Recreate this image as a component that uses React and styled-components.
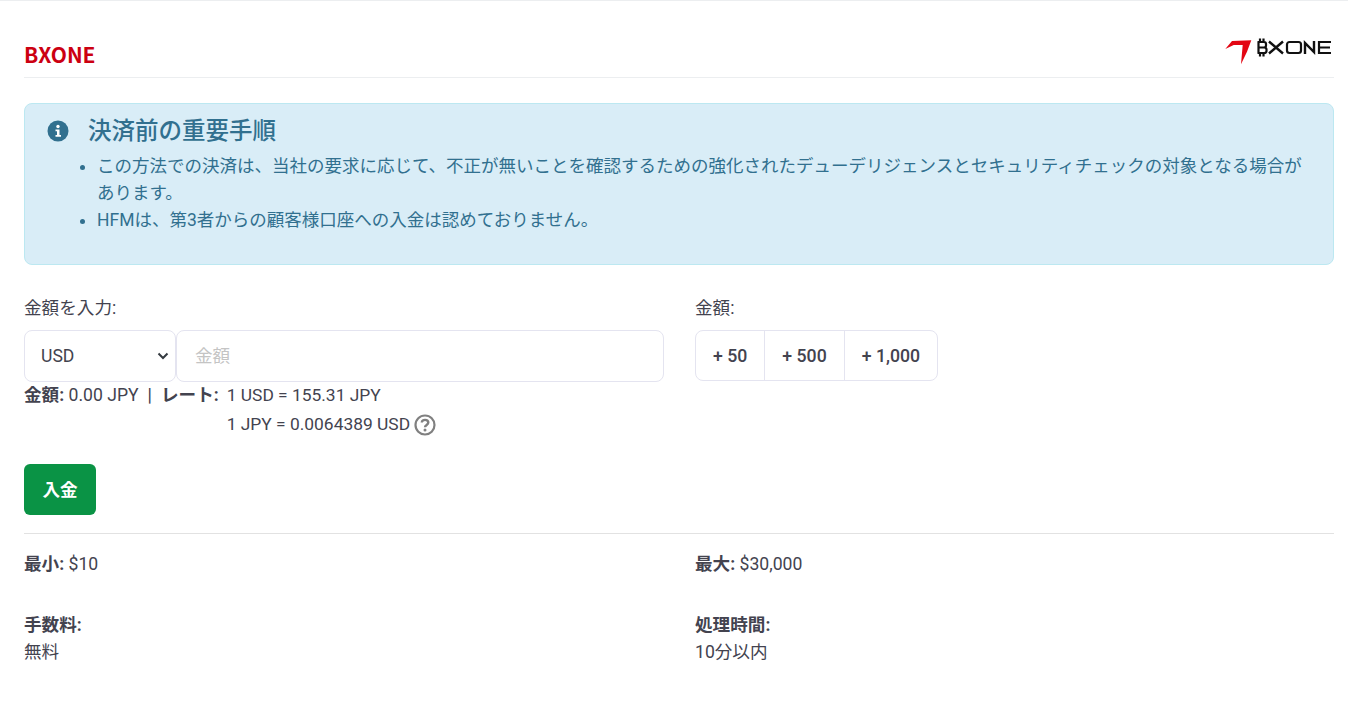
import React from 'react'
import styled, { createGlobalStyle } from 'styled-components'

const GlobalStyle = createGlobalStyle`
  html, body {
    margin: 0;
    background: #fff;
  }
  body {
    font-family: Roboto, "Noto Sans CJK JP", sans-serif;
    font-size: 17.6px;
    color: #43434f;
  }
  * {
    box-sizing: border-box;
  }
`

const Page = styled.div`
  border-top: 1px solid #eceef0;
  padding: 0 14px 0 24px;
  height: 728px;
  overflow: hidden;
`

const Header = styled.header`
  display: flex;
  justify-content: space-between;
  align-items: flex-end;
  height: 77px;
  border-bottom: 1px solid #eceef0;
  padding-bottom: 9px;
`

const Brand = styled.h1`
  margin: 0;
  font-family: "Noto Sans CJK JP", sans-serif;
  font-size: 21px;
  line-height: 27px;
  font-weight: 700;
  color: #cc0011;
`

const LogoWrap = styled.div`
  display: flex;
  height: 29px;
  margin: 0 0 2px;
`

const Alert = styled.section`
  margin-top: 25px;
  height: 162px;
  background: #d9edf7;
  border: 1px solid #bce8f1;
  border-radius: 8px;
  color: #31708f;
  padding: 13px 22px;
`

const AlertTitle = styled.div`
  display: flex;
  align-items: center;
  gap: 19px;
  font-size: 23.5px;
  line-height: 28px;
  font-weight: 500;
`

const AlertList = styled.ul`
  margin: 8px 0 0;
  padding: 0 0 0 50px;
  line-height: 27px;
  font-size: 17.5px;
`

const Columns = styled.div`
  display: grid;
  grid-template-columns: 640px 639px;
  column-gap: 31px;
`

const FormRow = styled(Columns)`
  margin-top: 32px;
`

const FieldLabel = styled.div`
  line-height: 22px;
  margin-bottom: 11px;
`

const InputGroup = styled.div`
  display: flex;
  height: 52px;
`

const SelectBox = styled.div`
  width: 152px;
  flex: none;
  display: flex;
  align-items: center;
  justify-content: space-between;
  padding: 0 6px 0 16px;
  border: 1px solid #e4e4f0;
  border-radius: 8px;
`

const AmountInput = styled.input`
  flex: 1;
  min-width: 0;
  border: 1px solid #e4e4f0;
  border-radius: 8px;
  padding: 0 18px;
  font: inherit;
  color: inherit;
  outline: none;

  &::placeholder {
    color: #c4c4c4;
    opacity: 1;
  }
`

const RateRow = styled.div`
  display: flex;
  margin-top: -1px;
  line-height: 29px;
  white-space: pre;
`

const RateValues = styled.div`
  margin-left: 8px;
  font-size: 17.4px;
`

const HelpLine = styled.div`
  display: flex;
  align-items: center;
  gap: 4px;
`

const Sep = styled.span`
  margin: 0 9px 0 9px;
  font-weight: 500;
`

const Strong = styled.strong`
  font-weight: 700;
`

const QuickGroup = styled.div`
  display: inline-flex;
  height: 51px;
  border: 1px solid #e4e4f0;
  border-radius: 8px;
`

const QuickButton = styled.button`
  padding: 0 17px;
  background: none;
  border: 0;
  border-left: ${({ $first }) => ($first ? '0' : '1px solid #e4e4f0')};
  font: inherit;
  font-size: 17.7px;
  font-weight: 500;
  color: inherit;
`

const Deposit = styled.button`
  display: block;
  width: 72px;
  height: 51px;
  margin-top: 25px;
  padding-bottom: 4px;
  border: 0;
  border-radius: 6px;
  background: #0a9345;
  color: #fff;
  font: inherit;
  font-weight: 700;
`

const Divider = styled.hr`
  margin: 18px 0 0;
  border: 0;
  border-top: 1px solid #e2e2e2;
`

const InfoGrid = styled(Columns)`
  margin-top: 17px;
  row-gap: 34px;
  line-height: 27px;
`

const App = () => {
  return (
    <Page>
      <GlobalStyle />
      <Header>
        <Brand>BXONE</Brand>
        <LogoWrap>
          <svg width="110" height="29" viewBox="0 0 110 29">
            <path d="M1.300 12 L8 4 L27.300 3.300 L23 14.700 L17 27.300 L18.700 8 L9.700 8 Z" fill="#e30613" />
            <path d="M33.500 5 H40 Q42 5 42 7 V8.500 Q42 10.500 40 10.500 H33.500 M40 10.500 Q42.500 10.500 42.500 12.500 V14 Q42.500 16 40 16 H33.500 M34.500 5 V16 M36 1.500 V5 M39.500 1.500 V5 M36 16 V19.500 M39.500 16 V19.500" fill="none" stroke="#111" strokeWidth="2.200" />
            <path d="M45 4.500 L59 16.500 M59 4.500 L45 16.500" fill="none" stroke="#111" strokeWidth="2.400" />
            <rect x="63" y="5" width="14" height="11" rx="2.500" fill="none" stroke="#111" strokeWidth="2.200" />
            <path d="M81 17 V6 L90 15 V4" fill="none" stroke="#111" strokeWidth="2.400" />
            <path d="M107 5 H95 V16 H107 M95 10.500 H106" fill="none" stroke="#111" strokeWidth="2.200" />
          </svg>
        </LogoWrap>
      </Header>

      <Alert>
        <AlertTitle>
          <svg width="22" height="22" viewBox="0 0 22 22">
            <circle cx="11" cy="11" r="10.500" fill="#31708f" />
            <circle cx="11" cy="6.500" r="1.700" fill="#fff" />
            <path d="M8.500 9.500 H12.500 V15 H14 V16.800 H8.500 V15 H10 V11.300 H8.500 Z" fill="#fff" />
          </svg>
          決済前の重要手順
        </AlertTitle>
        <AlertList>
          <li>この方法での決済は、当社の要求に応じて、不正が無いことを確認するための強化されたデューデリジェンスとセキュリティチェックの対象となる場合があります。</li>
          <li>HFMは、第3者からの顧客様口座への入金は認めておりません。</li>
        </AlertList>
      </Alert>

      <FormRow>
        <div>
          <FieldLabel>金額を入力:</FieldLabel>
          <InputGroup>
            <SelectBox>
              USD
              <svg width="12" height="12" viewBox="0 0 12 12">
                <path d="M1.500 3.500 L6 8 L10.500 3.500" fill="none" stroke="#343a40" strokeWidth="2" />
              </svg>
            </SelectBox>
            <AmountInput placeholder="金額" />
          </InputGroup>
          <RateRow>
            <Strong>金額:</Strong> 0.00 JPY
            <Sep>|</Sep>
            <Strong>レート:</Strong>
            <RateValues>
              <div>1 USD = 155.31 JPY</div>
              <HelpLine>
                1 JPY = 0.0064389 USD
                <svg width="22" height="22" viewBox="0 0 22 22">
                  <circle cx="11" cy="11" r="9.500" fill="none" stroke="#808080" strokeWidth="2.200" />
                  <path d="M7.800 8.600 C7.800 4.900 14.300 5 14.300 8.600 C14.300 11 11 10.800 11 13.300" fill="none" stroke="#808080" strokeWidth="2.400" />
                  <circle cx="11" cy="16" r="1.500" fill="#808080" />
                </svg>
              </HelpLine>
            </RateValues>
          </RateRow>
        </div>
        <div>
          <FieldLabel>金額:</FieldLabel>
          <QuickGroup>
            <QuickButton $first>+ 50</QuickButton>
            <QuickButton>+ 500</QuickButton>
            <QuickButton>+ 1,000</QuickButton>
          </QuickGroup>
        </div>
      </FormRow>

      <Deposit>入金</Deposit>
      <Divider />

      <InfoGrid>
        <div><Strong>最小:</Strong> $10</div>
        <div><Strong>最大:</Strong> $30,000</div>
        <div><Strong>手数料:</Strong><br />無料</div>
        <div><Strong>処理時間:</Strong><br />10分以内</div>
      </InfoGrid>
    </Page>
  )
}

export default App
